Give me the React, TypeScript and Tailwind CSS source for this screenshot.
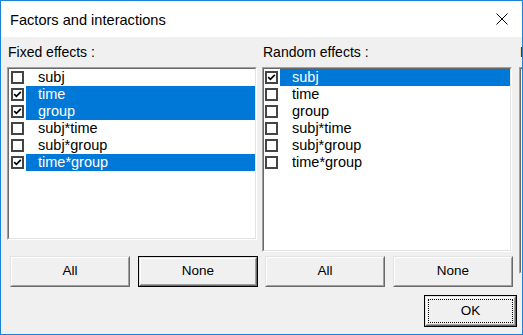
import React from "react";

type Item = { label: string; checked: boolean; selected: boolean };

const fixedEffects: Item[] = [
  { label: "subj", checked: false, selected: false },
  { label: "time", checked: true, selected: true },
  { label: "group", checked: true, selected: true },
  { label: "subj*time", checked: false, selected: false },
  { label: "subj*group", checked: false, selected: false },
  { label: "time*group", checked: true, selected: true },
];

const randomEffects: Item[] = [
  { label: "subj", checked: true, selected: true },
  { label: "time", checked: false, selected: false },
  { label: "group", checked: false, selected: false },
  { label: "subj*time", checked: false, selected: false },
  { label: "subj*group", checked: false, selected: false },
  { label: "time*group", checked: false, selected: false },
];

const font = { fontFamily: '"Liberation Sans", Arial, sans-serif' };

function CheckBox({ checked }: { checked: boolean }) {
  return (
    <span className="flex h-[13px] w-[13px] shrink-0 items-center justify-center border-2 border-[#444] bg-white">
      {checked && (
        <svg width="9" height="9" viewBox="0 0 9 9">
          <polyline points="1.2,4.2 3.4,6.4 7.8,1.8" fill="none" stroke="#000" strokeWidth="1.7" />
        </svg>
      )}
    </span>
  );
}

function ListBox({ items, height, indent }: { items: Item[]; height: string; indent: string }) {
  return (
    <div className={`${height} border border-t-[#a0a0a0] border-l-[#a0a0a0] border-r-white border-b-white`}>
      <div className="h-full overflow-hidden border border-t-[#696969] border-l-[#696969] border-r-[#e3e3e3] border-b-[#e3e3e3] bg-white">
        {items.map((it) => (
          <div key={it.label} className={`flex h-[17px] items-center ${indent}`}>
            <CheckBox checked={it.checked} />
            <div
              className={`ml-[2px] flex h-full flex-1 items-center pl-[12px] text-[14.5px] leading-[17px] ${
                it.selected ? "bg-[#0078d7] text-white" : "text-black"
              }`}
            >
              {it.label}
            </div>
          </div>
        ))}
      </div>
    </div>
  );
}

function Button({ label, isDefault, focused, className }: { label: string; isDefault?: boolean; focused?: boolean; className: string }) {
  const face = (
    <div className="h-full border border-t-[#e3e3e3] border-l-[#e3e3e3] border-r-[#696969] border-b-[#696969]">
      <div className="relative flex h-full items-center justify-center border border-t-white border-l-white border-r-[#a0a0a0] border-b-[#a0a0a0] bg-[#f0f0f0] text-[13.5px] text-black">
        {focused && <span className="absolute inset-[1px] border border-dotted border-black" />}
        {label}
      </div>
    </div>
  );
  return (
    <div className={`${className} shrink-0 ${isDefault ? "border border-black" : ""}`}>{face}</div>
  );
}

export default function App() {
  return (
    <div
      className="flex h-[335px] w-[523px] flex-col overflow-hidden border border-[#1883d7] bg-[#f0f0f0] text-black"
      style={font}
    >
      <div className="flex h-[36px] shrink-0 items-start justify-between bg-white pl-[9px] pr-[14px] pt-[11px]">
        <span className="text-[14.6px] leading-[17px]">Factors and interactions</span>
        <svg width="12" height="12" viewBox="0 0 12 12" className="mt-[1px]">
          <path d="M0.5 0.5 L11.5 11.5 M11.5 0.5 L0.5 11.5" stroke="#000" strokeWidth="1" />
        </svg>
      </div>

      <div className="flex shrink-0 items-start gap-[5px] overflow-hidden pl-[6px] pt-[7px]">
        <div className="flex w-[250px] shrink-0 flex-col">
          <div className="h-[16px] pl-[1px] text-[14px] leading-[16px]">Fixed effects :</div>
          <div className="mt-[7px]">
            <ListBox items={fixedEffects} height="h-[173px]" indent="pl-[2px]" />
          </div>
          <div className="mt-[16px] flex gap-[8px] pl-[3px]">
            <Button label="All" className="h-[31px] w-[120px]" />
            <Button label="None" isDefault className="h-[31px] w-[120px]" />
          </div>
        </div>

        <div className="flex w-[250px] shrink-0 flex-col">
          <div className="h-[16px] pl-[1px] text-[14px] leading-[16px]">Random effects :</div>
          <div className="mt-[7px]">
            <ListBox items={randomEffects} height="h-[185px]" indent="pl-[1px]" />
          </div>
          <div className="mt-[4px] flex gap-[8px] pl-[3px]">
            <Button label="All" className="h-[31px] w-[120px]" />
            <Button label="None" className="h-[31px] w-[120px]" />
          </div>
        </div>

        <div className="ml-[2px] flex w-[250px] shrink-0 flex-col">
          <div className="h-[16px] pl-[1px] text-[14px] leading-[16px]">Factors :</div>
          <div className="mt-[7px]">
            <ListBox items={[]} height="h-[207px]" indent="pl-[1px]" />
          </div>
        </div>
      </div>

      <div className="mt-auto flex justify-end pb-[7px] pr-[5px]">
        <Button label="OK" isDefault focused className="h-[32px] w-[93px]" />
      </div>
    </div>
  );
}
